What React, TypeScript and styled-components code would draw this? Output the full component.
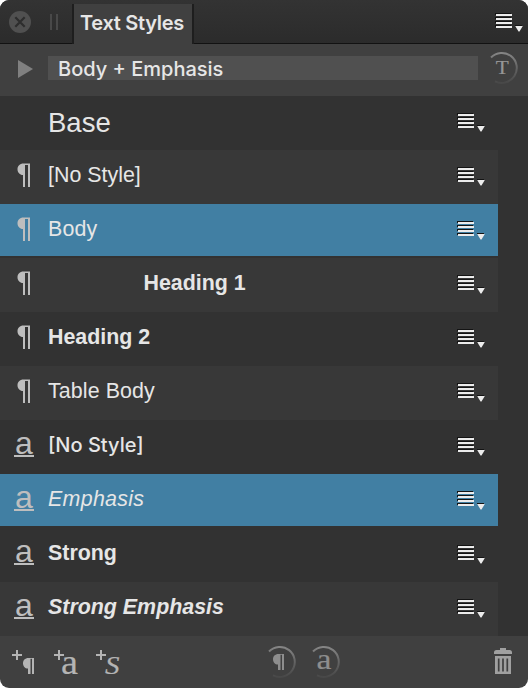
import React from "react";
import styled, { createGlobalStyle } from "styled-components";

const GlobalStyle = createGlobalStyle`
  body { margin: 0; background: #fff; }
  * { box-sizing: border-box; }
`;

const SYSTEM = 'Inter, "Liberation Sans", sans-serif';
const ARIAL = '"Liberation Sans", Arial, sans-serif';

const Panel = styled.main`
  width: 528px;
  height: 688px;
  display: flex;
  flex-direction: column;
  overflow: hidden;
  border-radius: 9px;
  background: #404040;
  color: #e6e6e6;
`;

const TitleBar = styled.header`
  height: 44px;
  display: flex;
  align-items: flex-start;
  background: linear-gradient(#333, #2b2b2b);
  box-shadow: inset 0 -1px #121212;
`;

const CloseButton = styled.button`
  width: 22px;
  height: 22px;
  margin: 11px 0 0 9px;
  padding: 0;
  border: 0;
  background: none;
`;

const Grip = styled.div`
  width: 8px;
  height: 16px;
  margin: 14px 16px 0 19px;
  border: solid #494949;
  border-width: 0 2px;
`;

const Tab = styled.h1`
  width: 118px;
  height: 40px;
  margin: 4px 0 0;
  padding-left: 6px;
  background: #404040;
  box-shadow: -2px 0 #1e1e1e, 2px 0 #1e1e1e;
  font: 600 20px/38px ${SYSTEM};
  letter-spacing: -0.3px;
  white-space: nowrap;
`;

const MenuButton = styled.button<{ $top: number; $right: number }>`
  width: 29px;
  height: 21px;
  flex: none;
  margin: ${(p) => p.$top}px ${(p) => p.$right}px 0 auto;
  padding: 0;
  border: 0;
  background: none;
`;

const CurrentStyle = styled.section`
  height: 52px;
  display: flex;
  align-items: flex-start;
`;

const Expander = styled.svg`
  width: 16px;
  height: 18px;
  margin: 16px 14px 0 18px;
`;

const StyleField = styled.div`
  width: 430px;
  height: 24px;
  margin-top: 12px;
  padding-left: 10px;
  background: #505050;
  font: 500 20px/26px ${SYSTEM};
  letter-spacing: 0;
  white-space: nowrap;
`;

const List = styled.ul`
  height: 540px;
  margin: 0;
  padding: 0;
  list-style: none;
  background: #323232;
`;

const Row = styled.li<{ $shade: "dark" | "light" | "selected" }>`
  width: 498px;
  height: ${(p) => (p.$shade === "selected" ? 52 : 54)}px;
  margin-bottom: ${(p) => (p.$shade === "selected" ? 2 : 0)}px;
  display: flex;
  align-items: flex-start;
  background: ${(p) =>
    ({ dark: "#323232", light: "#383838", selected: "#417fa3" })[p.$shade]};
`;

const KindCell = styled.span`
  width: 48px;
  height: 52px;
  flex: none;
`;

const CharacterMark = styled.span`
  display: block;
  width: 20px;
  height: 37px;
  margin-left: 14px;
  border-bottom: 2px solid #bebebe;
  color: #bebebe;
  font: 400 32px/46px ${ARIAL};
  text-align: center;
`;

const StyleName = styled.span<{
  $size: number;
  $line: number;
  $weight?: number;
  $italic?: boolean;
  $system?: boolean;
  $indent?: number;
  $spacing?: number;
}>`
  padding-left: ${(p) => p.$indent ?? 0}px;
  font-family: ${(p) => (p.$system ? SYSTEM : ARIAL)};
  font-size: ${(p) => p.$size}px;
  line-height: ${(p) => p.$line}px;
  font-weight: ${(p) => p.$weight ?? 400};
  font-style: ${(p) => (p.$italic ? "italic" : "normal")};
  letter-spacing: ${(p) => p.$spacing ?? 0}px;
  white-space: nowrap;
`;

const Footer = styled.footer`
  height: 52px;
  display: flex;
  align-items: flex-start;
`;

const FooterButton = styled.button<{ $left: number; $width: number }>`
  width: ${(p) => p.$width}px;
  height: 36px;
  margin: 8px 0 0 ${(p) => p.$left}px;
  padding: 0;
  border: 0;
  background: none;
`;

const ResetButton = styled.button<{ $top: number; $left: number }>`
  width: 34px;
  height: 34px;
  margin: ${(p) => p.$top}px 0 0 ${(p) => p.$left}px;
  padding: 0;
  border: 0;
  background: none;
`;

const Drawing = styled.svg`
  display: block;
  overflow: visible;
`;

const SerifMark = styled.text`
  font-family: "Liberation Serif", serif;
  stroke-width: 0.2px;
`;

const MenuIcon = () => (
  <Drawing width="29" height="21">
    {[1, 5, 9, 13].map((y) => (
      <g key={y}>
        <path d={`M0 ${y - 1}h16v1h-15v1h-1z`} fill="#141414" />
        <rect x="1" y={y} width="16" height="2" fill="#ececec" />
      </g>
    ))}
    <rect x="20" y="12" width="7" height="1" fill="#141414" />
    <path d="M20.200 13h7.600l-3.300 5.600h-1z" fill="#ececec" />
  </Drawing>
);

const Pilcrow = () => (
  <Drawing width="48" height="52">
    <path
      d="M30 13.500H23.500C19.800 13.500 17.500 16 17.500 19.200S19.800 25 23 25V37h2V15h3v22h2z"
      fill="#bebebe"
    />
  </Drawing>
);

const SmallPilcrow = ({ x, y, fill }: { x: number; y: number; fill: string }) => (
  <path
    transform={`translate(${x} ${y})`}
    d="M11 0H5.500C2 0 0 2.300 0 5.300s2 5.300 5 5.300V16H7.500V0.800h1.500V16h2z"
    fill={fill}
  />
);

const Ring = ({ id, children }: { id: string; children: React.ReactNode }) => (
  <Drawing width="34" height="34">
    <defs>
      <linearGradient id={id} x1="0" y1="0" x2="0" y2="1">
        <stop offset="0" stopColor="#858585" />
        <stop offset=".5" stopColor="#646464" />
        <stop offset="1" stopColor="#484848" />
      </linearGradient>
    </defs>
    <path d="M6 6.500A15 15 0 1 1 10 30.300" fill="none" stroke={`url(#${id})`} strokeWidth="2" />
    {children}
  </Drawing>
);

const Plus = () => <path d="M0 4h4V0h2v4h4v2H6v4H4V6H0z" fill="#b4b4b4" />;

type Item = {
  name: string;
  kind: "group" | "paragraph" | "character";
  shade: "dark" | "light" | "selected";
  size?: number;
  line?: number;
  weight?: number;
  italic?: boolean;
  system?: boolean;
  indent?: number;
  spacing?: number;
};

const styles: Item[] = [
  { name: "Base", kind: "group", shade: "dark", size: 27.5, line: 53 },
  { name: "[No Style]", kind: "paragraph", shade: "light" },
  { name: "Body", kind: "paragraph", shade: "selected", spacing: 0.15 },
  { name: "Heading 1", kind: "paragraph", shade: "light", weight: 700, indent: 95.5 },
  { name: "Heading 2", kind: "paragraph", shade: "dark", weight: 700 },
  { name: "Table Body", kind: "paragraph", shade: "light", spacing: 0.1 },
  { name: "[No Style]", kind: "character", shade: "dark", weight: 500, system: true, size: 20, line: 50 },
  { name: "Emphasis", kind: "character", shade: "selected", italic: true, spacing: 0.3 },
  { name: "Strong", kind: "character", shade: "dark", weight: 700 },
  { name: "Strong Emphasis", kind: "character", shade: "light", weight: 700, italic: true },
];

export default function App() {
  return (
    <>
      <GlobalStyle />
      <Panel>
        <TitleBar>
          <CloseButton aria-label="Close">
            <Drawing width="22" height="22">
              <circle cx="11" cy="11" r="11" fill="#505050" />
              <path d="M6.300 6.300l9.400 9.400M15.700 6.300l-9.400 9.400" stroke="#2d2d2d" strokeWidth="2.200" />
            </Drawing>
          </CloseButton>
          <Grip />
          <Tab>Text Styles</Tab>
          <MenuButton $top={13} $right={4} aria-label="Panel menu">
            <MenuIcon />
          </MenuButton>
        </TitleBar>
        <CurrentStyle>
          <Expander>
            <path d="M0 0l15 9-15 9z" fill="#808080" />
          </Expander>
          <StyleField>Body + Emphasis</StyleField>
          <ResetButton $top={7} $left={7} aria-label="Reset formatting">
            <Ring id="ringT">
              <SerifMark x="17.300" y="23" fontSize="19" textAnchor="middle" fill="#969696" stroke="#969696" textLength="13" lengthAdjust="spacingAndGlyphs">
                T
              </SerifMark>
            </Ring>
          </ResetButton>
        </CurrentStyle>
        <List>
          {styles.map((s) => (
            <Row key={s.kind + s.name} $shade={s.shade}>
              <KindCell>
                {s.kind === "paragraph" && <Pilcrow />}
                {s.kind === "character" && <CharacterMark>a</CharacterMark>}
              </KindCell>
              <StyleName
                $size={s.size ?? 21.4}
                $line={s.line ?? 51}
                $weight={s.weight}
                $italic={s.italic}
                $system={s.system}
                $indent={s.indent}
                $spacing={s.spacing}
              >
                {s.name}
              </StyleName>
              <MenuButton $top={17} $right={12} aria-label="Style menu">
                <MenuIcon />
              </MenuButton>
            </Row>
          ))}
        </List>
        <Footer>
          <FooterButton $left={12} $width={26} aria-label="Add paragraph style">
            <Drawing width="26" height="36">
              <g transform="translate(0 6)"><Plus /></g>
              <SmallPilcrow x={11} y={14} fill="#b4b4b4" />
            </Drawing>
          </FooterButton>
          <FooterButton $left={16} $width={26} aria-label="Add character style">
            <Drawing width="26" height="36">
              <g transform="translate(0 6)"><Plus /></g>
              <SerifMark x="7" y="30" fontSize="35" fill="#b4b4b4" stroke="#b4b4b4" textLength="17" lengthAdjust="spacingAndGlyphs">
                a
              </SerifMark>
            </Drawing>
          </FooterButton>
          <FooterButton $left={16} $width={26} aria-label="Add group style">
            <Drawing width="26" height="36">
              <g transform="translate(0 6)"><Plus /></g>
              <SerifMark x="9" y="30" fontSize="25.500" fontStyle="italic" fill="#b4b4b4" stroke="#b4b4b4" textLength="14.500" lengthAdjust="spacingAndGlyphs">
                S
              </SerifMark>
            </Drawing>
          </FooterButton>
          <ResetButton $top={9} $left={141} aria-label="Reset paragraph">
            <Ring id="ringP">
              <SmallPilcrow x={10} y={9} fill="#8e8e8e" />
            </Ring>
          </ResetButton>
          <ResetButton $top={9} $left={10} aria-label="Reset character">
            <Ring id="ringA">
              <SerifMark x="17" y="24" fontSize="30" textAnchor="middle" fill="#8e8e8e" stroke="#8e8e8e" textLength="15" lengthAdjust="spacingAndGlyphs">
                a
              </SerifMark>
            </Ring>
          </ResetButton>
          <FooterButton $left={153} $width={18} aria-label="Delete style">
            <Drawing width="18" height="36">
              <path d="M0 8.500q0-2.500 2.500-2.500H6V4h6v2h3.500Q18 6 18 8.500V10H0z" fill="#a0a0a0" />
              <path d="M1 12h16v18H1z" fill="#a0a0a0" />
              <path d="M4.700 14.500v13M9 14.500v13M13.300 14.500v13" stroke="#404040" strokeWidth="1.700" />
            </Drawing>
          </FooterButton>
        </Footer>
      </Panel>
    </>
  );
}
